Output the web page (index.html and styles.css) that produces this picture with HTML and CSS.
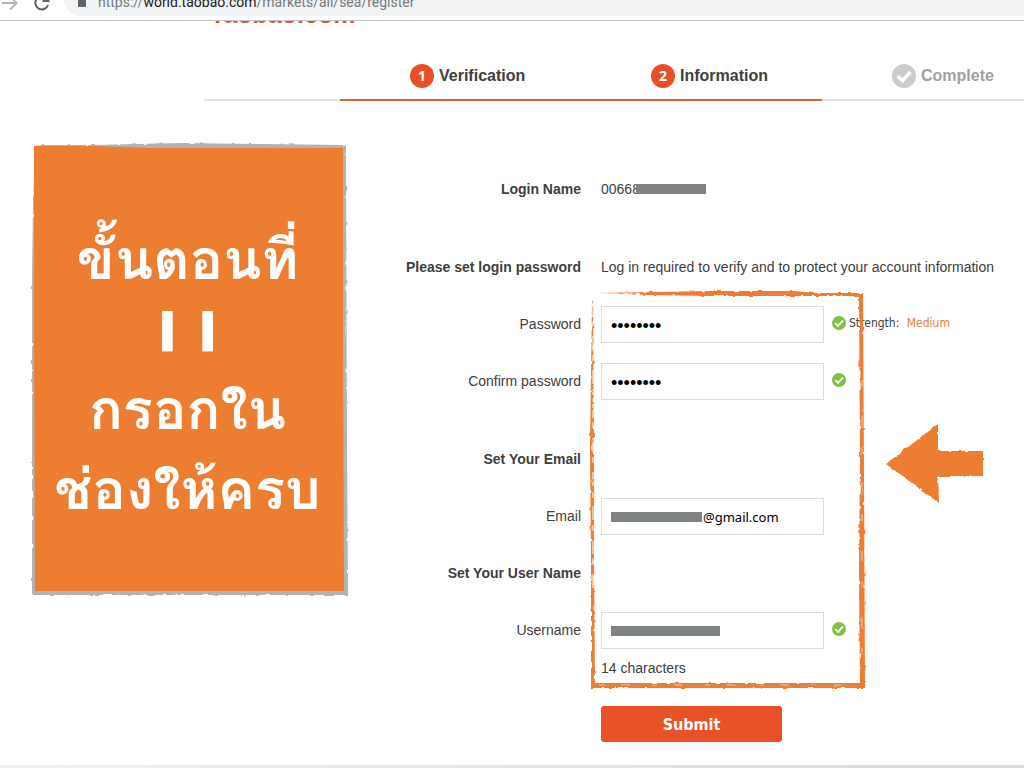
FILE: index.html
```html
<!DOCTYPE html>
<html lang="en">
<head>
    <meta charset="utf-8">
    <title>Register</title>
    <link rel="stylesheet" href="styles.css">
</head>
<body>
    <svg class="defs" width="0" height="0" aria-hidden="true">
        <filter id="rough" x="-5%" y="-5%" width="110%" height="110%">
            <feTurbulence type="fractalNoise" baseFrequency="0.12" numOctaves="3" seed="4" result="noise"/>
            <feDisplacementMap in="SourceGraphic" in2="noise" scale="3" xChannelSelector="R" yChannelSelector="G"/>
        </filter>
        <symbol id="ok" viewBox="0 0 14 14">
            <circle cx="7" cy="7" r="7" fill="#7fc242"/>
            <path d="M3.2 7.2L6 9.9L10.9 4.6" fill="none" stroke="#fff" stroke-width="1.8"/>
        </symbol>
    </svg>

    <header class="browser-bar">
        <svg class="nav-icons" width="52" height="24" viewBox="0 0 52 24" fill="none">
            <path d="M2 13H16M10 6.500L16.500 13L10 19.500" stroke="#b4b6b8" stroke-width="2"/>
            <path d="M47 9A6.500 6.500 0 1 0 48 15M48.500 5V11H42.500" stroke="#5f6368" stroke-width="2"/>
        </svg>
        <div class="address">
            <svg width="10" height="14" viewBox="0 0 10 14">
                <rect x="1" y="4" width="8" height="8" rx="1" fill="#5f6368"/>
                <path d="M3 5V3a2 2 0 0 1 4 0V5" fill="none" stroke="#5f6368" stroke-width="1.500"/>
            </svg>
            <span>https://<b>world.taobao.com</b>/markets/all/sea/register</span>
        </div>
    </header>

    <div class="logo">Taobao.com</div>

    <ol class="steps">
        <li class="step active"><span class="num">1</span>Verification</li>
        <li class="step active"><span class="num">2</span>Information</li>
        <li class="step">
            <svg width="24" height="24" viewBox="0 0 24 24">
                <circle cx="12" cy="12" r="12" fill="#ccc"/>
                <path d="M5.500 12L10.500 16.500L18.500 8" fill="none" stroke="#fff" stroke-width="3.500"/>
            </svg>
            Complete
        </li>
    </ol>

    <main class="content">
        <aside class="note" lang="th">
            <svg class="note-frame" viewBox="0 0 317 453" preserveAspectRatio="none">
                <g filter="url(#rough)" fill="#b3b3b3">
                    <path d="M10 2L60 2L150 0L230 1L315 2L316 300L317 452L1 452L1 130L2 60L4 3Z"/>
                </g>
                <path d="M3 3L60 3L120 5L312 5L312 200L313 448L4 448L3 200Z" fill="#ed7d31"/>
            </svg>
            <p>ขั้นตอนที่</p>
            <p class="roman">I I</p>
            <p>กรอกใน</p>
            <p>ช่องให้ครบ</p>
        </aside>

        <form class="form">
            <div class="row spaced">
                <span class="label title">Login Name</span>
                <span class="login-name">00668<span class="mask"></span></span>
            </div>
            <div class="row">
                <span class="label title">Please set login password</span>
                <span>Log in required to verify and to protect your account information</span>
            </div>

            <div class="fields">
                <div class="row">
                    <label class="label" for="password">Password</label>
                    <div class="control">
                        <input type="password" id="password" value="xxxxxxxx">
                        <svg class="ok" width="14" height="14"><use href="#ok"/></svg>
                        <span class="strength">Strength: <em>Medium</em></span>
                    </div>
                </div>
                <div class="row spaced">
                    <label class="label" for="confirm">Confirm password</label>
                    <div class="control">
                        <input type="password" id="confirm" value="xxxxxxxx">
                        <svg class="ok" width="14" height="14"><use href="#ok"/></svg>
                    </div>
                </div>
                <div class="row">
                    <span class="label title">Set Your Email</span>
                </div>
                <div class="row">
                    <label class="label" for="email">Email</label>
                    <div class="control">
                        <input type="text" id="email" class="email" value="@gmail.com">
                        <span class="mask over email-mask"></span>
                    </div>
                </div>
                <div class="row">
                    <span class="label title">Set Your User Name</span>
                </div>
                <div class="row">
                    <label class="label" for="username">Username</label>
                    <div class="control">
                        <input type="text" id="username">
                        <span class="mask over user-mask"></span>
                        <svg class="ok" width="14" height="14"><use href="#ok"/></svg>
                    </div>
                </div>
                <p class="hint">14 characters</p>

                <!-- hand-drawn frame round the fields -->
                <svg class="frame" width="278" height="402" viewBox="0 0 278 402">
                    <g filter="url(#rough)" fill="#ed7d31">
                        <path d="M8 3L120 1L205 1L225 3L274 3L274 6L200 6L120 6L60 5Z"/>
                        <path d="M270 3L274 3L275 180L276 398L271 398L270 280L271 170Z"/>
                        <path d="M2 393L276 393L276 398L2 398Z"/>
                        <path d="M3 9L4 9L5 160L5 270L6 398L2 398L2 270L1 160Z"/>
                    </g>
                    <g filter="url(#rough)" fill="none" stroke="#fff">
                        <path d="M10 4H50" stroke-width="1" stroke-dasharray="9 3"/>
                        <path d="M4 12V300" stroke-dasharray="14 5 6 9"/>
                        <path d="M273 90V385" stroke-width=".6" stroke-dasharray="7 29 12 19"/>
                        <path d="M10 395H260" stroke-width=".6" stroke-dasharray="5 17 9 22"/>
                    </g>
                </svg>
                <svg class="arrow" width="100" height="82" viewBox="0 0 100 82">
                    <path filter="url(#rough)" d="M1 41L53 1L53 28L98 28L98 53L53 53L54 80Z" fill="#ed7d31"/>
                </svg>
            </div>

            <button class="submit" type="submit">Submit</button>
        </form>
    </main>

    <footer class="bottom-edge"></footer>
</body>
</html>
```

FILE: styles.css
```css
* {
    box-sizing: border-box;
}
body {
    margin: 0;
    min-height: 100vh;
    display: flex;
    flex-direction: column;
    overflow-x: hidden;
    background: #fff;
    color: #404040;
    font: 14px "Liberation Sans", Arial, sans-serif;
}
.defs {
    position: absolute;
}

/* browser bar, cut off by the top edge */
.browser-bar {
    display: flex;
    align-items: flex-end;
    height: 21px;
    padding-bottom: 4px;
    border-bottom: 1px solid #c4c8c4;
    overflow: hidden;
}
.nav-icons {
    flex: none;
    margin-bottom: 2px;
}
.address {
    flex: 1;
    display: flex;
    align-items: center;
    gap: 11px;
    height: 32px;
    margin-left: 12px;
    padding: 4px 13px 0;
    border-radius: 16px 0 0 16px;
    background: #f1f3f4;
    color: #757a7e;
    font: 14px Roboto, sans-serif;
}
.address b {
    color: #202124;
    font-weight: 400;
}

.logo {
    display: flex;
    align-items: flex-end;
    height: 3px;
    margin-left: 210px;
    overflow: hidden;
    color: #e94f3a;
    font-size: 25px;
    font-weight: bold;
    line-height: 20px;
}

.steps {
    display: grid;
    grid-template-columns: 136px 241px 241px 1fr;
    margin: 26px 0 0 204px;
    padding: 0;
    list-style: none;
    font-size: 16px;
    font-weight: bold;
}
.steps::before {
    content: "";
    border-bottom: 2px solid #e4e4e4;
}
.step {
    display: flex;
    align-items: center;
    gap: 5px;
    height: 51px;
    padding: 2px 0 0 70px;
    border-bottom: 2px solid #e4e4e4;
    color: #a0a0a0;
}
.step.active {
    border-color: #d4683c;
    color: #404040;
}
.num {
    width: 24px;
    border-radius: 50%;
    background: #e94f26;
    color: #fff;
    font: bold 14px/24px "Open Sans", sans-serif;
    text-align: center;
}

.content {
    display: flex;
    align-items: flex-start;
}
.note {
    position: relative;
    flex: none;
    width: 317px;
    margin: 42px 0 0 31px;
    padding: 77px 4px 66px 0;
    color: #fff;
    font-family: Loma, Garuda, Waree, Umpush, "Noto Sans Thai", sans-serif;
    font-size: 56px;
    font-weight: bold;
    line-height: 80px;
    text-align: center;
}
.note p {
    position: relative;
    margin: 0;
    white-space: nowrap;
}
.note .roman {
    margin-bottom: 6px;
    font-family: "DejaVu Sans", sans-serif;
    line-height: 64px;
}
.note-frame {
    position: absolute;
    top: 0;
    left: 0;
    width: 100%;
    height: 100%;
    overflow: visible;
}

.form {
    flex: 1;
    margin-top: 70px;
}
.row {
    display: flex;
    align-items: center;
    gap: 20px;
    height: 37px;
    margin-bottom: 20px;
    white-space: nowrap;
}
.row.spaced {
    margin-bottom: 41px;
}
.label {
    flex: none;
    width: 233px;
    padding-bottom: 2px;
    text-align: right;
}
.label + span {
    padding-bottom: 2px;
}
.title {
    font-weight: bold;
}
.control {
    position: relative;
    display: flex;
    align-items: center;
}
.control input {
    width: 223px;
    height: 37px;
    padding: 0 10px;
    border: 1px solid #ddd;
    background: #fff;
    color: #000;
    font: 13px "Noto Sans", sans-serif;
}
.control input[type="password"] {
    padding: 4px 9px 0;
    font: 18px "Liberation Sans", sans-serif;
}
.control .email {
    padding-left: 101px;
}
.ok {
    margin: 0 3px 4px 8px;
}
.strength {
    margin-bottom: 4px;
    font: 12px "DejaVu Sans Condensed", sans-serif;
}
.strength em {
    margin-left: 4px;
    color: #ed7d31;
    font-style: normal;
}
.login-name {
    display: flex;
    align-items: center;
}
.mask {
    width: 70px;
    height: 10px;
    margin-left: -4px;
    background: #7f8482;
}
.mask.over {
    position: absolute;
    left: 10px;
    margin: 0;
}
.mask.email-mask {
    width: 91px;
}
.mask.user-mask {
    width: 109px;
}
.fields {
    position: relative;
}
.hint {
    margin: -10px 0 0 253px;
    line-height: 18px;
}
.frame {
    position: absolute;
    top: -16px;
    left: 241px;
    pointer-events: none;
}
.arrow {
    position: absolute;
    top: 117px;
    left: 537px;
}
.submit {
    width: 181px;
    height: 36px;
    margin: 29px 0 0 253px;
    border: none;
    border-radius: 3px;
    background: #e95126;
    color: #fff;
    font: bold 16px "DejaVu Sans Condensed", sans-serif;
    cursor: pointer;
}

.bottom-edge {
    height: 3px;
    margin-top: auto;
    background: linear-gradient(to right, #f1f1f1, #d9dadd);
}
```
